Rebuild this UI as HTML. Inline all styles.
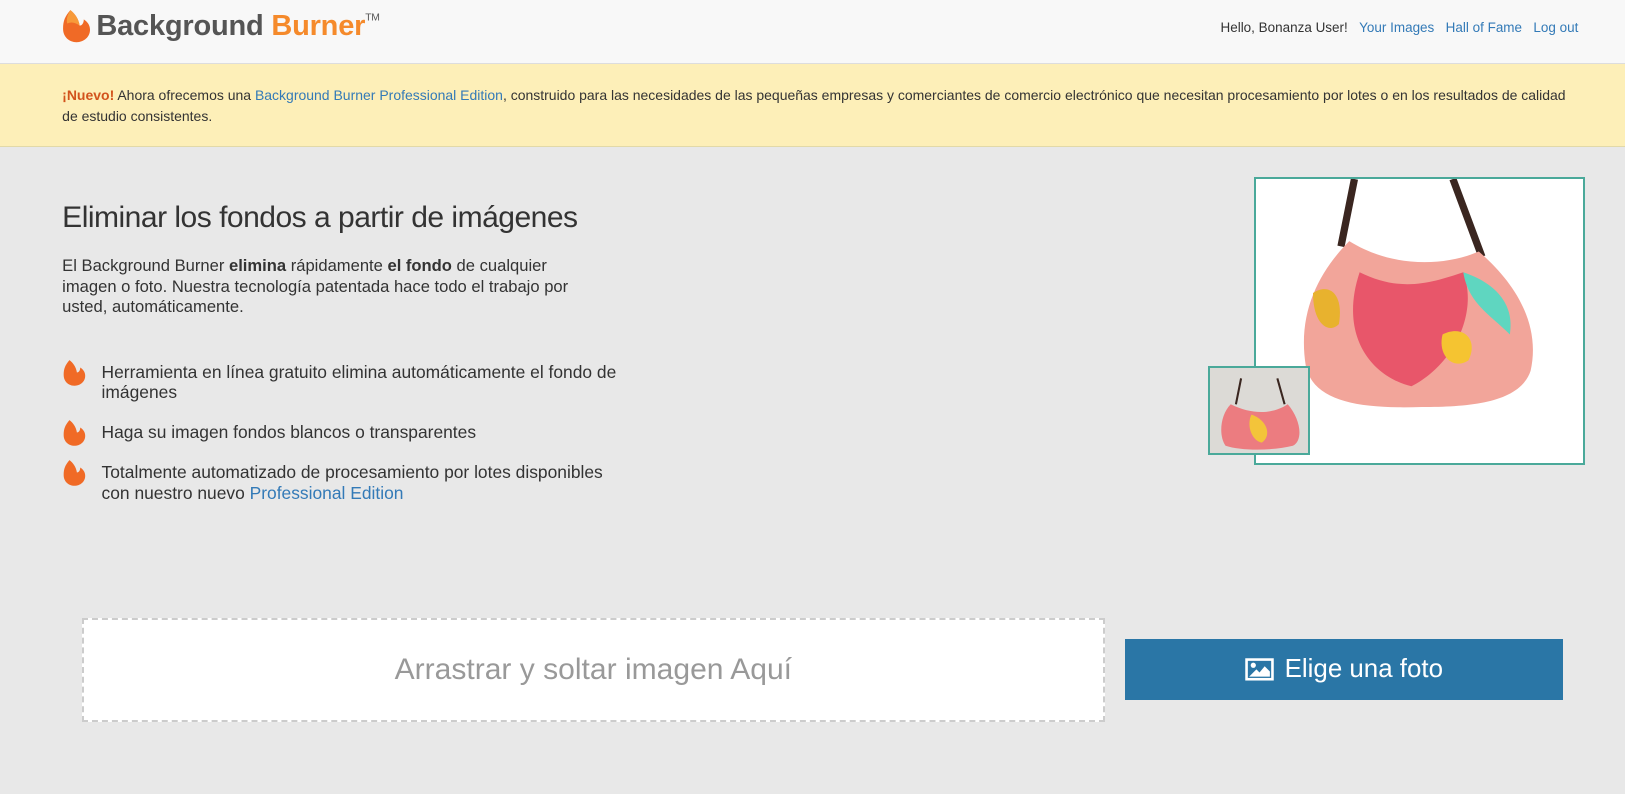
<!DOCTYPE html>
<html><head><meta charset="utf-8"><style>
*{margin:0;padding:0;box-sizing:border-box}
body{width:1625px;height:793px;overflow:hidden;background:#e8e8e8;font-family:"Liberation Sans",Arial,sans-serif;color:#333}
#w{zoom:1.03635;width:1568px;height:766px;position:relative}
.hdr{position:absolute;top:0;left:0;width:1568px;height:62px;background:#f8f8f8;border-bottom:1px solid #ddd}
.logo{position:absolute;top:10px;font-size:27px;font-weight:bold;letter-spacing:-0.2px}
.nav{position:absolute;right:45px;top:19px;font-size:13px}
.nav span,.nav a{margin-left:11px}
a{color:#337ab7;text-decoration:none}
.ban{position:absolute;top:62px;left:0;width:1568px;height:80px;background:#fdefb8;border-bottom:1px solid #e2d9a8;padding:20px 50px 20px 60px;font-size:13.5px;line-height:20px}
h1{position:absolute;left:60px;top:194px;font-size:29px;font-weight:normal;color:#333;letter-spacing:-0.5px}
.intro{position:absolute;left:60px;top:247px;width:520px;font-size:16px;line-height:20px}
.li{position:absolute;left:60px;width:545px;font-size:16.8px;line-height:20px;padding-left:38px}
.li svg{position:absolute;left:0;top:-4px}
.big{position:absolute;left:1210px;top:171px;width:319px;height:278px;border:2px solid #4aa99a;background:#fff}
.thumb{position:absolute;left:1166px;top:353px;width:98px;height:86px;border:2px solid #4aa99a;background:#dcdad6}
.drop{position:absolute;left:79px;top:596px;width:987px;height:101px;background:#fff;border:2px dashed #ccc;text-align:center;line-height:96px;font-size:29px;color:#999}
.btn{position:absolute;left:1086px;top:617px;width:422px;height:58px;background:#2a76a6;color:#fff;font-size:25px;text-align:center;line-height:58px}
</style></head><body><div id="w">
<div class="hdr">
<svg style="position:absolute;left:59px;top:8px" width="30" height="34" viewBox="0 0 30 34"><path d="M9 2 C4 8 2 12 2 20 C2 28 8 33 15 33 C22 33 28 28 28 21 C28 16 25 13 22 11 C22 15 20 17 18 17 C17 10 13 5 9 2Z" fill="#f06a26"/><path d="M9 2 C6 7 5 11 6 15 C10 13 14 14 18 17 C17 10 13 5 9 2Z" fill="#f79a3a"/></svg>
<div class="logo" style="left:93px;font-size:28px"><span style="color:#555">Background</span> <span style="color:#f58a2b">Burner</span><sup style="font-size:10px;color:#555;font-weight:normal;vertical-align:14px">TM</sup></div>
<div class="nav"><span>Hello, Bonanza User!</span><a>Your Images</a><a>Hall of Fame</a><a>Log out</a></div>
</div>
<div class="ban"><b style="color:#d2531c">¡Nuevo!</b> Ahora ofrecemos una <a>Background Burner Professional Edition</a>, construido para las necesidades de las pequeñas empresas y comerciantes de comercio electrónico que necesitan procesamiento por lotes o en los resultados de calidad de estudio consistentes.</div>
<h1>Eliminar los fondos a partir de imágenes</h1>
<div class="intro">El Background Burner <b>elimina</b> rápidamente <b>el fondo</b> de cualquier imagen o foto. Nuestra tecnología patentada hace todo el trabajo por usted, automáticamente.</div>
<div class="li" style="top:349px"><svg width="24" height="28" viewBox="0 0 30 34"><path d="M9 2 C4 8 2 12 2 20 C2 28 8 33 15 33 C22 33 28 28 28 21 C28 16 25 13 22 11 C22 15 20 17 18 17 C17 10 13 5 9 2Z" fill="#f06a26"/></svg>Herramienta en línea gratuito elimina automáticamente el fondo de imágenes</div>
<div class="li" style="top:407px"><svg width="24" height="28" viewBox="0 0 30 34"><path d="M9 2 C4 8 2 12 2 20 C2 28 8 33 15 33 C22 33 28 28 28 21 C28 16 25 13 22 11 C22 15 20 17 18 17 C17 10 13 5 9 2Z" fill="#f06a26"/></svg>Haga su imagen fondos blancos o transparentes</div>
<div class="li" style="top:446px"><svg width="24" height="28" viewBox="0 0 30 34"><path d="M9 2 C4 8 2 12 2 20 C2 28 8 33 15 33 C22 33 28 28 28 21 C28 16 25 13 22 11 C22 15 20 17 18 17 C17 10 13 5 9 2Z" fill="#f06a26"/></svg>Totalmente automatizado de procesamiento por lotes disponibles con nuestro nuevo <a>Professional Edition</a></div>
<div class="big"><svg width="315" height="274" viewBox="0 0 315 274">
<path d="M95 0 L82 65 M190 0 L218 75" stroke="#3a2620" stroke-width="7"/>
<path d="M90 60 C130 85 180 85 215 70 C250 100 275 140 265 185 C255 215 210 220 160 220 C100 222 55 215 48 180 C40 130 60 90 90 60Z" fill="#f2a59a"/>
<path d="M100 90 C140 110 170 100 200 90 C215 130 190 180 150 200 C110 190 80 150 100 90Z" fill="#e8566a"/>
<path d="M55 110 C70 100 85 110 80 140 C70 150 55 140 55 110Z" fill="#e8b22e"/>
<path d="M180 150 C200 140 215 155 205 175 C190 185 175 170 180 150Z" fill="#f5c431"/>
<path d="M200 90 C230 100 250 120 245 150 C225 130 205 120 200 90Z" fill="#5fd6c0"/>
</svg></div>
<div class="thumb"><svg width="94" height="82" viewBox="0 0 94 82"><path d="M30 10 L25 35 M65 10 L72 35" stroke="#3a2620" stroke-width="2"/><path d="M20 35 C40 45 60 45 75 35 C88 50 90 70 80 75 C60 80 30 80 15 75 C8 65 10 45 20 35Z" fill="#ec7c80"/><path d="M40 45 C55 50 60 65 50 72 C40 70 35 55 40 45Z" fill="#f3c43a"/></svg></div>
<div class="drop">Arrastrar y soltar imagen Aquí</div>
<div class="btn"><svg style="vertical-align:-3px;margin-right:10px" width="28" height="22" viewBox="0 0 28 22"><rect x="1.5" y="1.5" width="25" height="19" fill="none" stroke="#fff" stroke-width="2.5"/><circle cx="8" cy="7" r="2.5" fill="#fff"/><path d="M4 18 L11 11 L14 14 L19 8 L24 13 L24 18Z" fill="#fff"/></svg>Elige una foto</div>
</div></body></html>
